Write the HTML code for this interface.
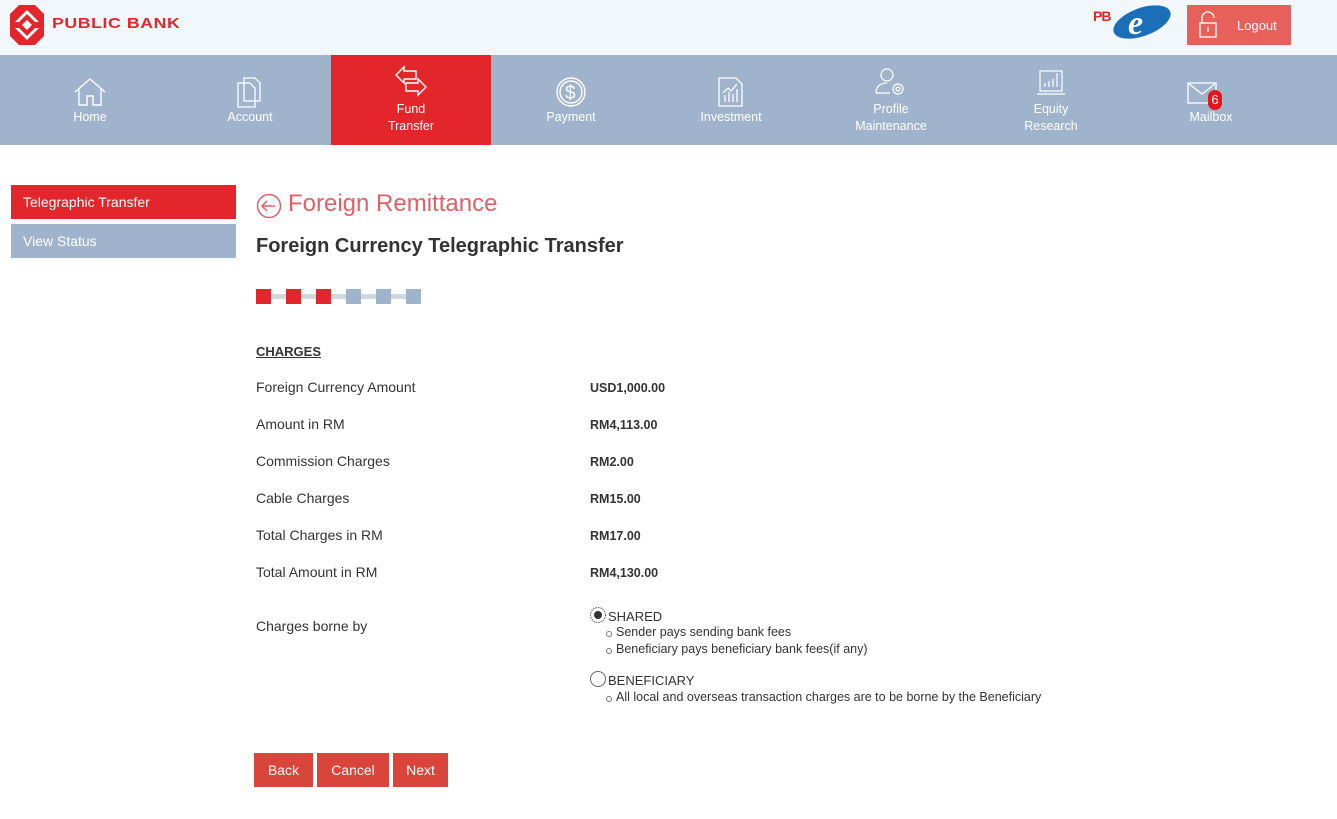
<!DOCTYPE html>
<html><head><meta charset="utf-8"><style>
*{margin:0;padding:0;box-sizing:border-box}
body{width:1337px;height:819px;background:#fff;font-family:"Liberation Sans",Arial,sans-serif;position:relative;overflow:hidden;color:#333}
.hdr{position:absolute;left:0;top:0;width:1337px;height:55px;background:#f1f7fa}
.nav{position:absolute;left:0;top:55px;width:1337px;height:90px;background:#9fb4cc}
.item{position:absolute;top:0;width:160px;height:90px;color:#fff;text-align:center;font-size:12.5px;line-height:17px}
.item svg{position:absolute;left:50%;transform:translateX(-50%)}
.item .t{position:absolute;left:0;width:100%}
.abs{position:absolute}
.lbl{position:absolute;left:256px;font-size:14px;color:#333}
.val{position:absolute;left:590px;font-size:12.5px;font-weight:bold;color:#333}
.btn{position:absolute;top:753px;height:34px;background:#d9453a;color:#fff;font-size:14px;line-height:34px;text-align:center}
.sm{position:absolute;font-size:12.5px;color:#333}
.b:before{content:"";position:absolute;left:-10px;top:6px;width:4px;height:4px;background:#fff;border:1px solid #777;border-radius:50%}
</style></head><body>
<div class="hdr">
  <svg class="abs" style="left:10px;top:5px" width="34" height="40" viewBox="0 0 34 40">
    <polygon points="9,0 25,0 34,9 34,31 25,40 9,40 0,31 0,9" fill="#e3262b"/>
    <polygon points="17,5 29,17 5,17" fill="#fff"/><polygon points="17,35 29,23 5,23" fill="#fff"/>
    <polygon points="17,9 25,17 9,17" fill="#e3262b"/><polygon points="17,31 25,23 9,23" fill="#e3262b"/>
    <polygon points="17,15 22,20 17,25 12,20" fill="#fff"/>
  </svg>
  <div class="abs" style="left:52px;top:15px;font-size:15px;font-weight:bold;color:#e3262b;letter-spacing:0.5px;transform:scaleX(1.18);transform-origin:left">PUBLIC BANK</div>
  <div class="abs" style="left:1093px;top:8px;font-size:14px;font-weight:bold;color:#e3262b;letter-spacing:-1px">PB</div>
  <svg class="abs" style="left:1110px;top:4px" width="64" height="36" viewBox="0 0 64 36"><ellipse cx="32" cy="18" rx="30" ry="14" fill="#1a6fb8" transform="rotate(-20 32 18)"/><text x="18" y="30" font-size="34" font-style="italic" font-weight="bold" fill="#fff" font-family="Liberation Serif">e</text></svg>
  <div class="abs" style="left:1187px;top:5px;width:104px;height:40px;background:#e8605a">
    <svg class="abs" style="left:10px;top:6px" width="22" height="28" viewBox="0 0 22 28" fill="none" stroke="#fff" stroke-width="1.3"><path d="M5 12V7a6 6 0 0 1 12 0"/><rect x="3" y="12" width="16" height="14"/><path d="M11 16v5"/></svg>
    <div class="abs" style="left:50px;top:13px;color:#fff;font-size:13px">Logout</div>
  </div>
</div>
<div class="nav">
  <div class="item" style="left:10px"><svg style="top:22px" width="34" height="30" viewBox="0 0 34 30" fill="none" stroke="#fff" stroke-width="1.4"><path d="M2 15L17 2l15 13M6 12v16h8v-9h6v9h8V12"/></svg><div class="t" style="top:54px">Home</div></div>
  <div class="item" style="left:170px"><svg style="top:21px" width="30" height="32" viewBox="0 0 30 32" fill="none" stroke="#fff" stroke-width="1.3"><path d="M9 2h11l5 5v18H9z"/><path d="M3 7h12l5 5v19H3z"/></svg><div class="t" style="top:54px">Account</div></div>
  <div class="item" style="left:331px;background:#e3262b"><svg style="top:10px" width="34" height="34" viewBox="0 0 34 34" fill="none" stroke="#fff" stroke-width="1.4"><path d="M2 10L10 2v4h12v8H10v4z"/><path d="M32 22l-8 8v-4H12v-8h12v-4z"/></svg><div class="t" style="top:46px">Fund<br>Transfer</div></div>
  <div class="item" style="left:491px"><svg style="top:21px" width="32" height="32" viewBox="0 0 32 32" fill="none" stroke="#fff" stroke-width="1.4"><circle cx="16" cy="16" r="14"/><circle cx="16" cy="16" r="11"/><text x="10" y="23" font-size="19" fill="#fff" stroke="none" font-family="Liberation Sans">$</text></svg><div class="t" style="top:54px">Payment</div></div>
  <div class="item" style="left:651px"><svg style="top:21px" width="28" height="32" viewBox="0 0 28 32" fill="none" stroke="#fff" stroke-width="1.3"><path d="M2 2h17l6 6v22H2z"/><path d="M8 26v-7M12 26v-10M16 26v-8M20 26v-13M6 17l5-5 3 3 6-7"/></svg><div class="t" style="top:54px">Investment</div></div>
  <div class="item" style="left:811px"><svg style="top:12px" width="34" height="32" viewBox="0 0 34 32" fill="none" stroke="#fff" stroke-width="1.2"><circle cx="13" cy="8" r="6"/><path d="M2 26c0-7 5-10 11-10M2 26h14"/><circle cx="24" cy="22" r="5"/><circle cx="24" cy="22" r="2"/></svg><div class="t" style="top:46px">Profile<br>Maintenance</div></div>
  <div class="item" style="left:971px"><svg style="top:12px" width="32" height="32" viewBox="0 0 32 32" fill="none" stroke="#fff" stroke-width="1.2"><rect x="5" y="4" width="22" height="20"/><path d="M2 27h28M10 20v-4M14 20v-6M18 20v-8M22 20V6"/></svg><div class="t" style="top:46px">Equity<br>Research</div></div>
  <div class="item" style="left:1131px"><svg style="top:27px;margin-left:-9px" width="30" height="22" viewBox="0 0 30 22" fill="none" stroke="#fff" stroke-width="1.3"><rect x="1" y="1" width="28" height="20"/><path d="M1 1l14 11L29 1"/></svg>
    <div class="abs" style="left:77px;top:35px;width:14px;height:20px;background:#e8141a;border-radius:7px;color:#fff;font-size:13px;line-height:20px">6</div>
    <div class="t" style="top:54px">Mailbox</div></div>
</div>
<div class="abs" style="left:11px;top:185px;width:225px;height:34px;background:#e3262b;color:#fff;font-size:14px;line-height:34px;padding-left:12px">Telegraphic Transfer</div>
<div class="abs" style="left:11px;top:224px;width:225px;height:34px;background:#9fb4cc;color:#fff;font-size:14px;line-height:34px;padding-left:12px">View Status</div>
<svg class="abs" style="left:256px;top:193px" width="26" height="26" viewBox="0 0 26 26" fill="none" stroke="#e06068" stroke-width="1.5"><circle cx="13" cy="13" r="11.5"/><path d="M19 13H7M11 8l-5 5 5 5"/></svg>
<div class="abs" style="left:288px;top:190px;font-size:24px;color:#e06068">Foreign Remittance</div>
<div class="abs" style="left:256px;top:235px;font-size:20px;font-weight:bold;color:#333">Foreign Currency Telegraphic Transfer</div>
<div class="abs" style="left:260px;top:294px;width:156px;height:5px;background:#cfd8de"></div>
<div class="abs" style="left:256px;top:289px;width:15px;height:15px;background:#e3262b"></div>
<div class="abs" style="left:286px;top:289px;width:15px;height:15px;background:#e3262b"></div>
<div class="abs" style="left:316px;top:289px;width:15px;height:15px;background:#e3262b"></div>
<div class="abs" style="left:346px;top:289px;width:15px;height:15px;background:#9fb4cc"></div>
<div class="abs" style="left:376px;top:289px;width:15px;height:15px;background:#9fb4cc"></div>
<div class="abs" style="left:406px;top:289px;width:15px;height:15px;background:#9fb4cc"></div>
<div class="lbl" style="top:344px;font-size:13px;font-weight:bold;text-decoration:underline">CHARGES</div>
<div class="lbl" style="top:379px">Foreign Currency Amount</div><div class="val" style="top:381px">USD1,000.00</div>
<div class="lbl" style="top:416px">Amount in RM</div><div class="val" style="top:418px">RM4,113.00</div>
<div class="lbl" style="top:453px">Commission Charges</div><div class="val" style="top:455px">RM2.00</div>
<div class="lbl" style="top:490px">Cable Charges</div><div class="val" style="top:492px">RM15.00</div>
<div class="lbl" style="top:527px">Total Charges in RM</div><div class="val" style="top:529px">RM17.00</div>
<div class="lbl" style="top:564px">Total Amount in RM</div><div class="val" style="top:566px">RM4,130.00</div>
<div class="lbl" style="top:618px">Charges borne by</div>
<svg class="abs" style="left:589px;top:606px" width="18" height="18"><circle cx="9" cy="9" r="7.5" fill="#fff" stroke="#555" stroke-dasharray="1.5 1"/><circle cx="9" cy="9" r="4" fill="#333"/></svg>
<div class="sm" style="left:608px;top:609px;font-size:13px">SHARED</div>
<div class="sm b" style="left:616px;top:625px">Sender pays sending bank fees</div>
<div class="sm b" style="left:616px;top:642px">Beneficiary pays beneficiary bank fees(if any)</div>
<svg class="abs" style="left:589px;top:670px" width="18" height="18"><circle cx="9" cy="9" r="7.5" fill="#fff" stroke="#666"/></svg>
<div class="sm" style="left:608px;top:673px;font-size:13px">BENEFICIARY</div>
<div class="sm b" style="left:616px;top:690px">All local and overseas transaction charges are to be borne by the Beneficiary</div>
<div class="btn" style="left:254px;width:59px">Back</div>
<div class="btn" style="left:317px;width:72px">Cancel</div>
<div class="btn" style="left:393px;width:55px">Next</div>
</body></html>
